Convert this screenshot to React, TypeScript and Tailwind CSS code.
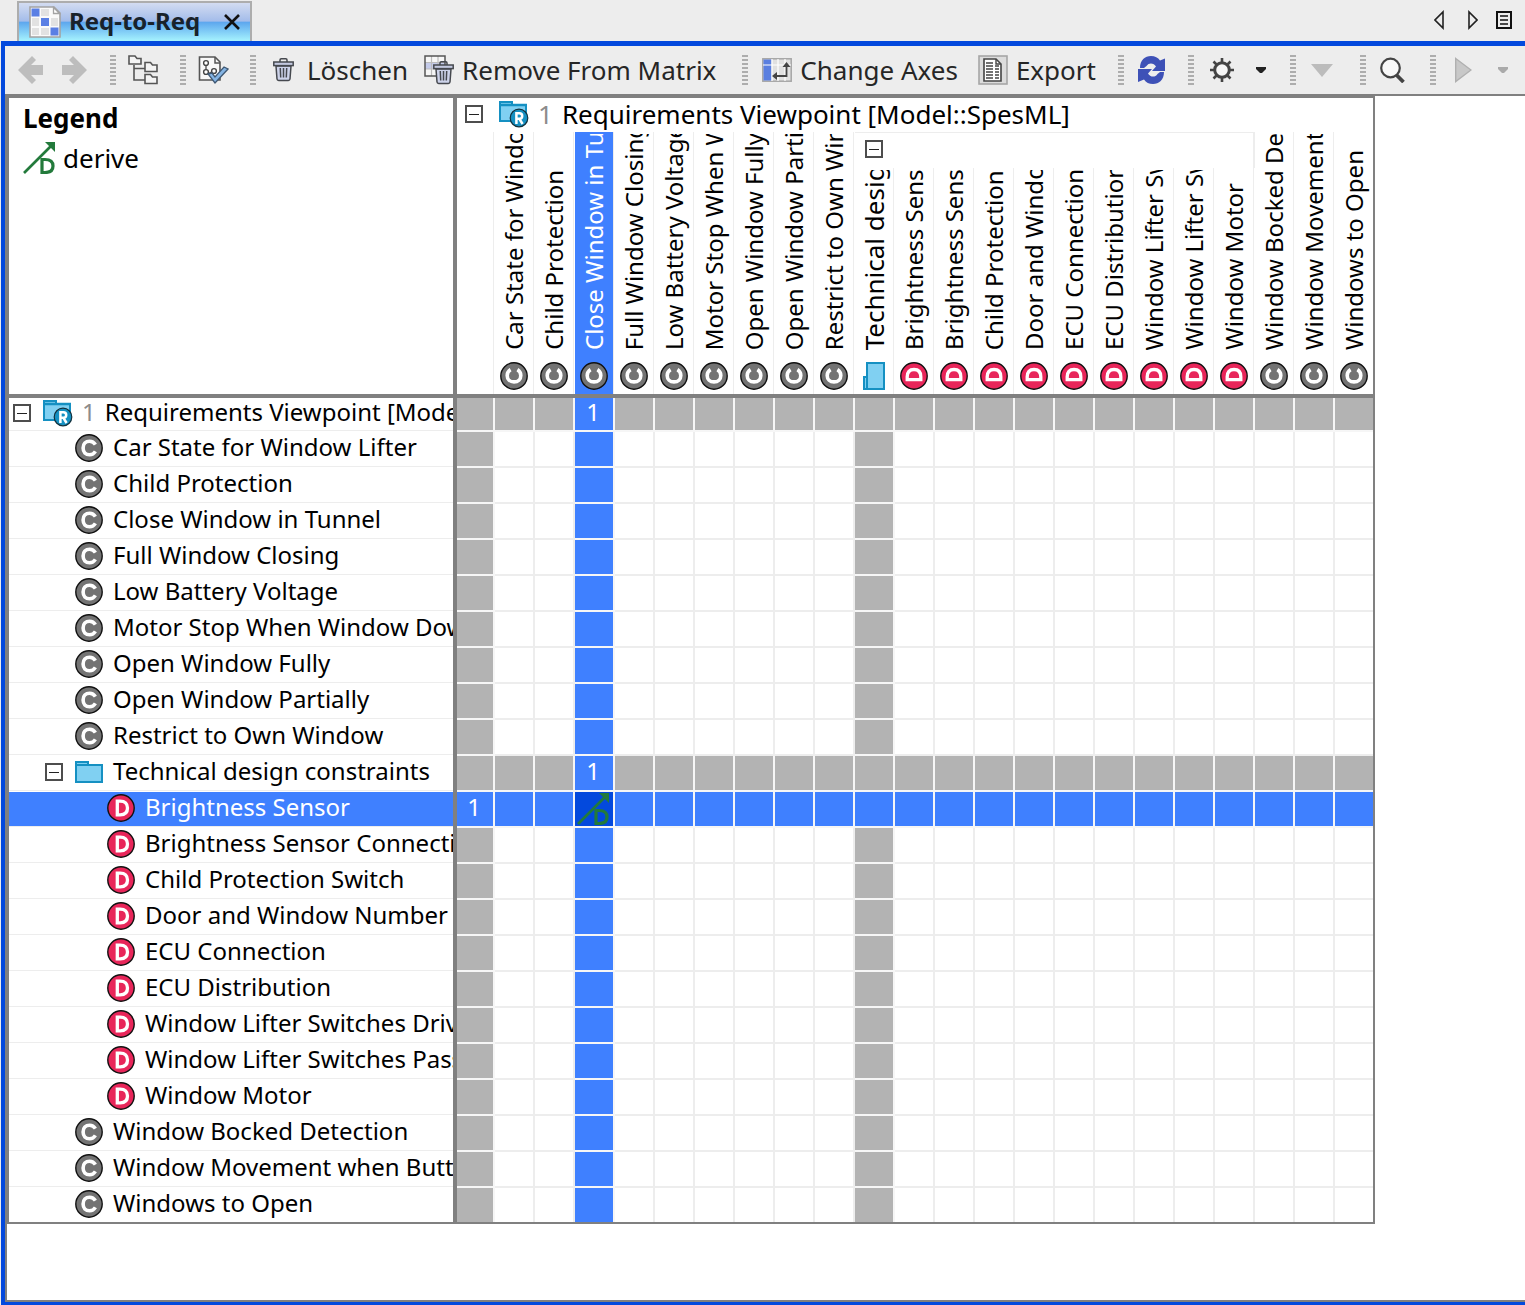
import React from "react";

type Kind = "C" | "D" | "folder" | "root";
type Item = { label: string; kind: Kind };

const items: Item[] = [
  { label: "Car State for Window Lifter", kind: "C" },
  { label: "Child Protection", kind: "C" },
  { label: "Close Window in Tunnel", kind: "C" },
  { label: "Full Window Closing", kind: "C" },
  { label: "Low Battery Voltage", kind: "C" },
  { label: "Motor Stop When Window Down", kind: "C" },
  { label: "Open Window Fully", kind: "C" },
  { label: "Open Window Partially", kind: "C" },
  { label: "Restrict to Own Window", kind: "C" },
  { label: "Technical design constraints", kind: "folder" },
  { label: "Brightness Sensor", kind: "D" },
  { label: "Brightness Sensor Connection", kind: "D" },
  { label: "Child Protection Switch", kind: "D" },
  { label: "Door and Window Number", kind: "D" },
  { label: "ECU Connection", kind: "D" },
  { label: "ECU Distribution", kind: "D" },
  { label: "Window Lifter Switches Driver", kind: "D" },
  { label: "Window Lifter Switches Passenger", kind: "D" },
  { label: "Window Motor", kind: "D" },
  { label: "Window Bocked Detection", kind: "C" },
  { label: "Window Movement when Button", kind: "C" },
  { label: "Windows to Open", kind: "C" },
];
const rows: Item[] = [{ label: "Requirements Viewpoint [Model::SpesML]", kind: "root" }, ...items];

const SELECTED_COL = 3;
const SELECTED_ROW = 11;
const LAST = rows.length - 1;
const isGroup = (i: number) => rows[i].kind === "root" || rows[i].kind === "folder";

function Badge({ kind, turned = false }: { kind: "C" | "D"; turned?: boolean }) {
  return (
    <svg viewBox="0 0 28 28" className={`size-7 shrink-0 ${turned ? "-rotate-90" : ""}`} aria-hidden="true">
      <circle cx="14" cy="14" r="13.2" fill={kind === "C" ? "#737373" : "#e8265a"} stroke="#111" strokeWidth="1.4" />
      {kind === "C" ? (
        <path d="M20.4 10.6C19 8.300 17.100 7.200 14.600 7.200C10.600 7.200 8.100 10 8.100 14S10.600 20.800 14.600 20.800C17.100 20.800 19 19.700 20.400 17.400" fill="none" stroke="#fff" strokeWidth="3.600" />
      ) : (
        <path d="M10.300 7.200V20.800H13.200C18 20.800 20.500 18.600 20.500 14S18 7.200 13.200 7.200Z" fill="none" stroke="#fff" strokeWidth="3.300" />
      )}
    </svg>
  );
}

function Folder({ turned = false }: { turned?: boolean }) {
  return (
    <svg viewBox="0 0 28 28" className={`size-7 shrink-0 ${turned ? "-rotate-90" : ""}`} aria-hidden="true">
      <path d="M1 8V4H13V8" fill="#80d0f2" stroke="#1590c2" strokeWidth="2" />
      <rect x="1" y="7" width="26" height="17" fill="#80d0f2" stroke="#1590c2" strokeWidth="2" />
    </svg>
  );
}

function RootFolder() {
  return (
    <svg viewBox="0 0 30 28" className="h-7 w-[30px] shrink-0" aria-hidden="true">
      <path d="M1 7V2H13V7" fill="#80d0f2" stroke="#1590c2" strokeWidth="2" />
      <rect x="1" y="5" width="26" height="16" fill="#80d0f2" stroke="#1590c2" strokeWidth="2" />
      <path d="M0 5H28" stroke="#1590c2" strokeWidth="2.500" />
      <circle cx="20" cy="18" r="8.800" fill="#1590c2" stroke="#12303c" strokeWidth="1.200" />
      <path d="M17.400 24V13.200H20.400A2.600 2.600 0 0 1 20.400 18.800H17.400M20.400 18.800L23.600 24" fill="none" stroke="#fff" strokeWidth="2.500" />
    </svg>
  );
}

function Toggle({ name }: { name: string }) {
  return (
    <button type="button" aria-label={`Collapse ${name}`} className="flex size-[18px] shrink-0 items-center justify-center border-2 border-[#4d4d4d] bg-white">
      <span className="h-px w-[10px] bg-[#222]" />
    </button>
  );
}

function Derive({ color }: { color: string }) {
  return (
    <svg viewBox="0 0 32 32" className="size-8 shrink-0" aria-label="derive" role="img">
      <path d="M1 31L28 4" stroke={color} strokeWidth="2.600" />
      <path d="M22 0H32V10Z" fill={color} />
      <path d="M19 17.500V30.500H22C27.300 30.500 30 28.400 30 24S27.300 17.500 22 17.500Z" fill="none" stroke={color} strokeWidth="3.200" />
    </svg>
  );
}

function Grip() {
  return (
    <svg viewBox="0 0 6 30" className="h-[30px] w-[6px] shrink-0" aria-hidden="true">
      <path d="M3 0V30" stroke="#adadad" strokeWidth="6" strokeDasharray="2 2" />
    </svg>
  );
}

function Arrow({ flip = false }: { flip?: boolean }) {
  return (
    <svg viewBox="0 0 26 28" className={`h-7 w-[26px] ${flip ? "rotate-180" : ""}`} aria-hidden="true">
      <path d="M0 14L14 0L18 4L13 9H25V19H13L18 24L14 28Z" fill="#bdbdbd" />
    </svg>
  );
}

function Trash({ x = 0, y = 0 }: { x?: number; y?: number }) {
  return (
    <g transform={`translate(${x} ${y})`} stroke="#46494f" strokeWidth="1.5">
      <path d="M7 4V2Q7 .8 8.2.8H12.8Q14 .8 14 2V4" fill="none" />
      <path d="M3 8H18L17 21Q16.8 22.4 15.4 22.4H5.6Q4.2 22.4 4 21Z" fill="#cdd3ea" />
      <rect x=".8" y="4" width="19.4" height="3.6" fill="#c4c9e0" />
      <path d="M7.3 10L7.7 19.5M10.5 10V19.5M13.7 10L13.3 19.5" fill="none" />
    </g>
  );
}

function Toolbar() {
  return (
    <div role="toolbar" className="flex h-12 items-center overflow-hidden text-[26px] text-[#262626]">
      <button type="button" aria-label="Back" className="ml-[13px]"><Arrow /></button>
      <button type="button" aria-label="Forward" className="mr-[23px] ml-[17px]"><Arrow flip /></button>
      <Grip />
      <button type="button" aria-label="Containment tree" className="mr-5 ml-3">
        <svg viewBox="0 0 32 30" className="h-[30px] w-8" fill="#f4f4f4" stroke="#555" strokeWidth="1.6" aria-hidden="true">
          <path d="M6 10V25H17M6 13.5H17" fill="none" />
          <path d="M1 9V1H7L9 3.5H13V9Z" />
          <path d="M17 16.500V7.500H22.500L24.500 10H29V16.500Z" />
          <path d="M17 28.500V19.500H22.500L24.500 22H29V28.500Z" />
        </svg>
      </button>
      <Grip />
      <button type="button" aria-label="Validate" className="mr-[21px] ml-3">
        <svg viewBox="0 0 31 30" className="h-[30px] w-[31px]" aria-hidden="true">
          <path d="M1.500 25V2H17L22 7V25Z" fill="#f8f8f8" stroke="#555" strokeWidth="1.6" />
          <path d="M17 2V8H22" fill="none" stroke="#555" strokeWidth="1.5" />
          <path d="M8 10V15M10 19L14 17" stroke="#555" strokeWidth="1.4" />
          <g fill="#fff" stroke="#444" strokeWidth="1.4">
            <circle cx="8" cy="8" r="2.400" /><circle cx="8" cy="17" r="2.400" /><circle cx="16" cy="16" r="2.400" />
          </g>
          <path d="M10 19L14 18L17 22L26 12L30 14L17 28Z" fill="#84b4e4" stroke="#3f5873" strokeWidth="1.3" />
        </svg>
      </button>
      <Grip />
      <button type="button" className="mr-4 ml-[17px] flex items-center gap-3 whitespace-nowrap">
        <svg viewBox="0 0 22 24" className="h-6 w-[22px]" aria-hidden="true"><Trash /></svg>
        Löschen
      </button>
      <button type="button" className="mr-[26px] flex items-center gap-2 whitespace-nowrap">
        <svg viewBox="0 0 30 30" className="size-[30px]" aria-hidden="true">
          <rect x="1" y="1" width="20" height="20" fill="#f6f6f6" />
          <rect x="1" y="8" width="20" height="6" fill="#c4cbea" />
          <path d="M7.500 1V21M14 1V21M1 7.500H21M1 14H21" stroke="#bbb" strokeWidth="1.200" />
          <rect x="1" y="1" width="20" height="20" fill="none" stroke="#555" strokeWidth="1.500" />
          <rect x="12" y="10" width="14" height="18" fill="#ededed" />
          <Trash x={9} y={6} />
        </svg>
        Remove From Matrix
      </button>
      <Grip />
      <button type="button" className="mr-5 ml-[14px] flex items-center gap-2 whitespace-nowrap">
        <svg viewBox="0 0 30 24" className="h-6 w-[30px]" aria-hidden="true">
          <rect x=".8" y=".8" width="28.400" height="22.400" fill="#e0e0e0" stroke="#a6a6a6" strokeWidth="1.500" />
          <rect x="1.500" y="1.500" width="8" height="21" fill="#5a7fe0" />
          <path d="M1 7H29M10 1V23M16 1V23M23 1V23" stroke="#fff" strokeWidth="1.200" />
          <path d="M24.500 6V18H13" fill="none" stroke="#444" strokeWidth="1.800" />
          <path d="M20.500 9L24.500 4L28.500 9ZM15 14L10 18L15 22Z" fill="#444" />
        </svg>
        Change Axes
      </button>
      <button type="button" className="mr-[22px] flex items-center gap-2 whitespace-nowrap">
        <svg viewBox="0 0 30 30" className="size-[30px]" aria-hidden="true">
          <rect x="1" y="1" width="28" height="28" fill="#dcdcdc" stroke="#a6a6a6" strokeWidth="1.600" />
          <path d="M6 4H18L23 9V26H6Z" fill="#fff" stroke="#444" strokeWidth="1.600" />
          <path d="M18 4V9H23" fill="none" stroke="#444" strokeWidth="1.400" />
          <path d="M8 8H15M8 11H15M17 11H21M8 14H15M17 14H21M8 17H15M17 17H21M8 20H15M17 20H21M8 23H15M17 23H21" stroke="#444" strokeWidth="1.400" />
        </svg>
        Export
      </button>
      <Grip />
      <button type="button" aria-label="Refresh" className="mr-[22px] ml-[14px]">
        <svg viewBox="0 0 28 28" className="size-7" fill="#3e51b7" aria-hidden="true">
          <path d="M2 12C2 4 7 0 13 0C17 0 20 1.500 22 4.500L27 2.500V15H14L18 10.500C16 7 11 6 8.500 10L6 12Z" />
          <path d="M26 16C26 24 21 28 15 28C11 28 8 26.500 6 23.500L0 26V13H14L10 17.500C12 21 17 22 19.500 18L22 16Z" />
        </svg>
      </button>
      <Grip />
      <button type="button" aria-label="Options" className="mr-6 ml-[15px] flex items-center gap-[21px]">
        <svg viewBox="0 0 26 26" className="size-[26px]" fill="none" stroke="#444" aria-hidden="true">
          <circle cx="13" cy="13" r="7.300" fill="#f6f6f6" strokeWidth="3" />
          <path d="M13 1V5M13 21V25M1 13H5M21 13H25M4.500 4.500L7.500 7.500M18.500 18.500L21.500 21.500M4.500 21.500L7.500 18.500M18.500 7.500L21.500 4.500" strokeWidth="2.600" />
        </svg>
        <svg viewBox="0 0 10 6" className="h-[6px] w-[10px]" aria-hidden="true"><path d="M0 0H10V2L6 6H4L0 2Z" fill="#222" /></svg>
      </button>
      <Grip />
      <button type="button" aria-label="Filter" className="mr-[27px] ml-[15px]">
        <svg viewBox="0 0 22 13" className="h-[13px] w-[22px]" aria-hidden="true"><path d="M0 0H22L11 13Z" fill="#bcbcbc" /></svg>
      </button>
      <Grip />
      <button type="button" aria-label="Search" className="mr-[25px] ml-[14px]">
        <svg viewBox="0 0 25 26" className="h-[26px] w-[25px]" fill="none" stroke="#444" aria-hidden="true">
          <circle cx="10.500" cy="11" r="9.300" fill="#f8f8f8" strokeWidth="2.200" />
          <path d="M16.500 18L23.500 25" strokeWidth="3.800" />
        </svg>
      </button>
      <Grip />
      <button type="button" aria-label="Run" className="ml-[19px] flex items-center gap-[26px]">
        <svg viewBox="0 0 17 26" className="h-[26px] w-[17px]" aria-hidden="true"><path d="M.7 1.500L16 13L.7 24.500Z" fill="#c8c8c8" stroke="#b0b0b0" strokeWidth="1.400" /></svg>
        <svg viewBox="0 0 10 6" className="h-[6px] w-[10px]" aria-hidden="true"><path d="M0 0H10V2L6 6H4L0 2Z" fill="#aaa" /></svg>
      </button>
    </div>
  );
}

function ColumnHeader({ index }: { index: number }) {
  const item = rows[index];
  const selected = index === SELECTED_COL;
  const nested = index >= 10 && index <= 19;
  return (
    <th scope="col" rowSpan={nested ? 1 : 2} className="border-b-4 border-[#808080] p-0 font-normal">
      <div
        className={`flex flex-col items-center justify-end gap-3 overflow-hidden pt-[2px] pb-1 ${nested ? "h-[226px]" : "h-[262px]"} ${index === LAST ? "" : "mr-px border-r border-[#ededed]"} ${selected ? "bg-[#3f80ff] text-white" : ""}`}
      >
        <div className="flex min-h-0 w-full flex-1 items-end justify-center overflow-hidden">
          <span className={`shrink-0 rotate-180 whitespace-nowrap leading-9 [writing-mode:vertical-rl] ${item.kind === "folder" ? "text-[26px]" : ""}`}>
            {item.label}
          </span>
        </div>
        {item.kind === "folder" ? <Folder turned /> : <Badge kind={item.kind as "C" | "D"} turned />}
      </div>
    </th>
  );
}

function RowHeader({ index }: { index: number }) {
  const item = rows[index];
  const selected = index === SELECTED_ROW;
  const pad =
    item.kind === "root" ? "pl-1" : item.kind === "folder" ? "pl-9" : item.kind === "D" ? "pl-[98px]" : "pl-[66px]";
  const height = index === 0 ? "h-[33px]" : index === LAST ? "h-[34px]" : "h-[35px]";
  return (
    <th scope="row" className="border-r-4 border-[#808080] p-0 text-left font-normal">
      <div
        className={`flex items-center overflow-hidden whitespace-nowrap pb-[2px] ${pad} ${height} ${index === LAST ? "" : "mb-px border-b border-[#ededed]"} ${selected ? "bg-[#3f80ff] text-white" : ""}`}
      >
        {item.kind === "root" && (
          <>
            <Toggle name={item.label} />
            <span className="ml-3 flex"><RootFolder /></span>
            <span className="mr-[9px] ml-[9px] pb-[2px] text-[#8c8c8c]">1</span>
          </>
        )}
        {item.kind === "folder" && (
          <>
            <Toggle name={item.label} />
            <span className="mr-[10px] ml-3 flex"><Folder /></span>
          </>
        )}
        {(item.kind === "C" || item.kind === "D") && <span className="mr-[10px] flex"><Badge kind={item.kind} /></span>}
        <span className="pb-[2px]">{item.label}</span>
      </div>
    </th>
  );
}

function Cell({ row, col }: { row: number; col: number }) {
  const both = row === SELECTED_ROW && col === SELECTED_COL;
  const blue = row === SELECTED_ROW || col === SELECTED_COL;
  const grey = isGroup(row) || isGroup(col);
  const fill = both ? "bg-[#0349dd]" : blue ? "bg-[#3f80ff]" : grey ? "bg-[#b3b3b3]" : "bg-white";
  const line = blue || grey ? "border-[#f6f6f6]" : "border-[#ededed]";
  const count = (col === SELECTED_COL && isGroup(row)) || (row === SELECTED_ROW && col === 0);
  return (
    <td className={`p-0 text-center leading-7 text-white ${fill} ${line} ${col === LAST ? "" : "border-r-2"} ${row === LAST ? "" : "border-b-2"}`}>
      {both ? <span className="flex justify-center pr-[2px]"><Derive color="#237a3b" /></span> : count ? <span className="block pr-[2px] pb-1">1</span> : null}
    </td>
  );
}

function Matrix() {
  return (
    <table className="w-[1368px] table-fixed border-separate border-spacing-0 border-2 border-[#808080] bg-white text-2xl text-black">
      <colgroup>
        <col className="w-[448px]" />
        <col className="w-[38px]" />
        {items.map((item, i) => <col key={i} className={i === items.length - 1 ? "w-[38px]" : "w-10"} />)}
      </colgroup>
      <thead>
        <tr className="h-[34px]">
          <td rowSpan={3} className="border-r-4 border-b-4 border-[#808080] p-0 align-top text-[26px]">
            <h2 className="mt-[2px] ml-[14px] font-bold leading-9">Legend</h2>
            <div className="mt-1 ml-[14px] flex items-center gap-2 leading-9">
              <Derive color="#237a3b" />
              derive
            </div>
          </td>
          <th colSpan={23} scope="colgroup" className="p-0 text-left text-[26px] font-normal">
            <div className="flex h-[34px] items-center whitespace-nowrap pb-[2px] pl-2">
              <Toggle name="columns" />
              <span className="ml-4 flex"><RootFolder /></span>
              <span className="mr-[9px] ml-[9px] text-[#8c8c8c]">1</span>
              <span>Requirements Viewpoint [Model::SpesML]</span>
            </div>
          </th>
        </tr>
        <tr className="h-9">
          <td rowSpan={2} className="border-b-4 border-[#808080] p-0">
            <div className="mr-px h-[262px] border-r border-[#ededed]" />
          </td>
          {rows.map((_, i) => (i > 0 && i < 10 ? <ColumnHeader key={i} index={i} /> : null))}
          <th colSpan={10} scope="colgroup" className="border-t border-r-2 border-[#ededed] p-0 align-top">
            <div className="flex pt-[7px] pl-[10px]"><Toggle name="Technical design constraints" /></div>
          </th>
          {rows.map((_, i) => (i > 19 ? <ColumnHeader key={i} index={i} /> : null))}
        </tr>
        <tr>
          {rows.map((_, i) => (i >= 10 && i <= 19 ? <ColumnHeader key={i} index={i} /> : null))}
        </tr>
      </thead>
      <tbody>
        {rows.map((_, r) => (
          <tr key={r}>
            <RowHeader index={r} />
            {rows.map((_, c) => <Cell key={c} row={r} col={c} />)}
          </tr>
        ))}
      </tbody>
    </table>
  );
}

export default function App() {
  return (
    <div className="flex min-h-screen flex-col bg-[#ededed] pl-px font-['Noto_Sans','Lucida_Grande',sans-serif]">
      <header className="flex h-[41px] items-end justify-between pr-[13px] pl-4">
        <div role="tablist" className="flex">
          <div className="flex h-10 items-center border-2 border-b-0 border-[#adadad] bg-[linear-gradient(to_bottom,#d3dcf1_0%,#a3bcea_48%,#5ca6ee_50%,#a6f3fe_100%)] pr-[10px] pl-[10px]">
            <svg viewBox="0 0 32 32" className="size-8" aria-hidden="true">
              <path d="M1 1H25L31 7V31H1Z" fill="#fafafa" stroke="#a3a3a3" strokeWidth="1.600" />
              <g fill="#e2e2e2">
                <path d="M12 3H20V10H12ZM3 12H10V20H3ZM3 22H10V29H3ZM12 22H20V29H12ZM22 12H29V20H22Z" />
              </g>
              <g fill="#5a7fe4">
                <rect x="2.500" y="2.500" width="8" height="8" /><rect x="12" y="12" width="8" height="8" /><rect x="21.500" y="21.500" width="8" height="8" />
              </g>
              <path d="M24.500 1.500V7.500H30.500Z" fill="#fff" stroke="#a3a3a3" strokeWidth="1.300" />
            </svg>
            <button type="button" role="tab" aria-selected="true" className="ml-2 pb-[2px] text-2xl font-bold text-[#18222b]">Req-to-Req</button>
            <button type="button" aria-label="Close tab" className="ml-6">
              <svg viewBox="0 0 16 16" className="size-4" aria-hidden="true"><path d="M1 1L15 15M15 1L1 15" stroke="#111" strokeWidth="2.600" /></svg>
            </button>
          </div>
        </div>
        <nav aria-label="Tabs" className="mb-[11px] flex items-center gap-6">
          <button type="button" aria-label="Previous tab">
            <svg viewBox="0 0 10 20" className="h-5 w-[10px]" aria-hidden="true"><path d="M9 2V18L1 10Z" fill="none" stroke="#222" strokeWidth="1.600" /></svg>
          </button>
          <button type="button" aria-label="Next tab">
            <svg viewBox="0 0 10 20" className="h-5 w-[10px]" aria-hidden="true"><path d="M1 2V18L9 10Z" fill="none" stroke="#222" strokeWidth="1.600" /></svg>
          </button>
          <button type="button" aria-label="List tabs" className="-ml-[6px]">
            <svg viewBox="0 0 16 18" className="h-[18px] w-4" aria-hidden="true">
              <path d="M1 1H15V17H1Z" fill="none" stroke="#111" strokeWidth="2" />
              <path d="M4 5H12M4 9H12M4 13H12" stroke="#111" strokeWidth="1.600" />
            </svg>
          </button>
        </nav>
      </header>
      <main className="flex flex-1 flex-col border-t-[5px] border-b-[3px] border-l-4 border-[#0349dd]">
        <Toolbar />
        <section className="flex-1 overflow-x-auto border-t-2 border-b-2 border-l-2 border-[#808080] bg-white">
          <Matrix />
        </section>
      </main>
    </div>
  );
}
